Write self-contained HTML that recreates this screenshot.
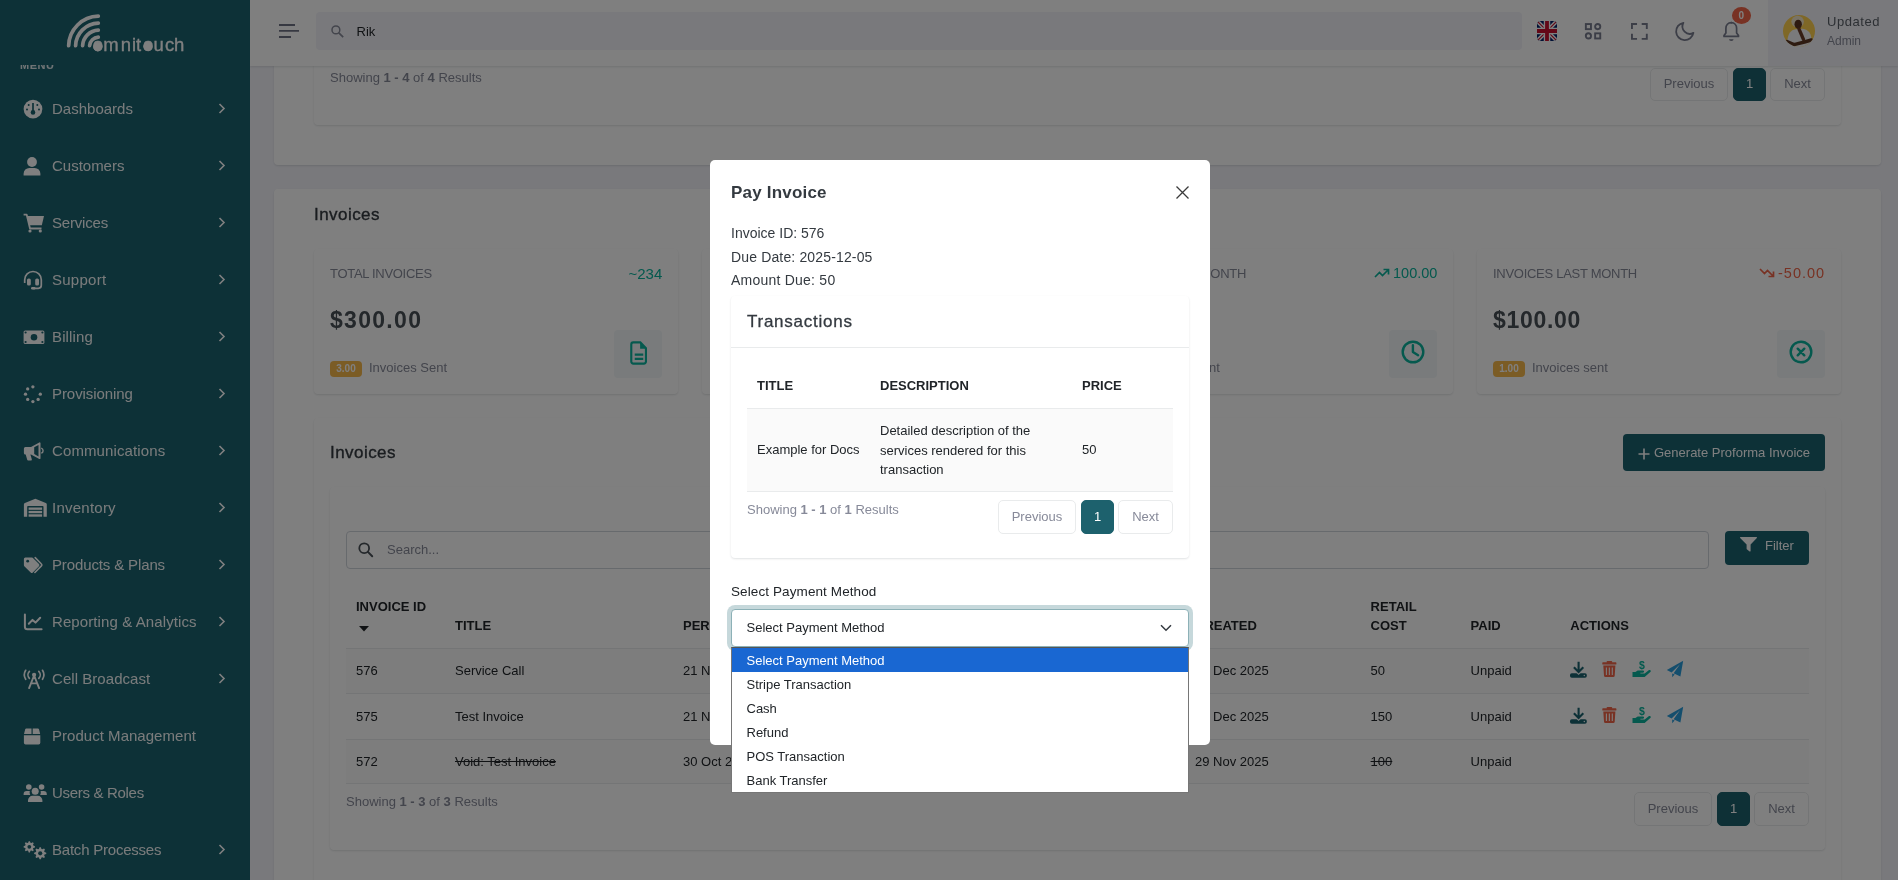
<!DOCTYPE html>
<html lang="en">
<head>
<meta charset="utf-8">
<title>Pay Invoice</title>
<style>
*{box-sizing:border-box;margin:0;padding:0}
html,body{width:1898px;height:880px;overflow:hidden}
body{background:#f3f3f9;font-family:"Liberation Sans",sans-serif;font-size:13px;line-height:19.5px;color:#212529;position:relative}
.a{position:absolute;white-space:nowrap}
svg{display:block;position:absolute;overflow:visible}
b{font-weight:700}
/* sidebar */
#sidebar{position:absolute;left:0;top:0;width:250px;height:880px;background:#1a626f;overflow:hidden}
#sidebar .tx{position:absolute;left:52px;font-size:15px;line-height:20px;color:#f4f7f7;white-space:nowrap}
/* header */
#header{position:absolute;left:250px;top:0;width:1648px;height:66px;background:#fff;box-shadow:0 1px 2px rgba(56,65,74,.15)}
/* cards */
.card{position:absolute;background:#fff;border-radius:4px;box-shadow:0 1px 2px rgba(56,65,74,.15)}
.muted{color:#878a99}
.pg{position:absolute;height:33.7px;border:1px solid #e9ebec;border-radius:5px;background:#fff;color:#878a99;font-size:13px;line-height:31.7px;text-align:center}
.pg.on{background:#1d616d;border-color:#1d616d;color:#fff}
.stat-t{position:absolute;font-size:13px;letter-spacing:-.3px;color:#878a99;text-transform:uppercase;white-space:nowrap}
.stat-v{position:absolute;font-size:23px;font-weight:700;letter-spacing:1px;color:#495057;white-space:nowrap}
.bdg{position:absolute;width:32px;height:16px;border-radius:4px;background:#f7b84b;color:#fff;font-size:10px;font-weight:700;line-height:16px;text-align:center}
.ibox{position:absolute;width:48px;height:48px;border-radius:4px;background:#f3f6f9}
.th{position:absolute;font-weight:700;font-size:13px;color:#212529;white-space:nowrap}
.td{position:absolute;font-size:13px;color:#212529;white-space:nowrap}
.hl{position:absolute;height:1px;background:#e9ebec}
#content,#header,#sidebar,#overlay{will-change:transform}
/* overlay */
#backdrop{position:absolute;left:0;top:0;width:1898px;height:880px;background:rgba(0,0,0,.5)}
#modal{position:absolute;left:710px;top:160px;width:500px;height:585px;background:#fff;border-radius:5px}
#modal .a{color:#212529}
</style>
</head>
<body>
<div id="content">
<!-- previous section (scrolled) -->
<div class="card" style="left:274px;top:-40px;width:1607px;height:205px"></div>
<div class="card" style="left:314px;top:-20px;width:1527px;height:145px"></div>
<div class="a muted" style="left:330px;top:68px">Showing <b>1 - 4</b> of <b>4</b> Results</div>
<div class="pg" style="left:1650px;top:68px;width:78px;height:32.700px;line-height:30.700px">Previous</div>
<div class="pg on" style="left:1733px;top:68px;width:33px;height:32.700px;line-height:30.700px">1</div>
<div class="pg" style="left:1770px;top:68px;width:55px;height:32.700px;line-height:30.700px">Next</div>

<!-- invoices section -->
<div class="card" style="left:274px;top:189px;width:1607px;height:760px"></div>
<div class="a" style="left:314px;top:204px;font-size:17px;letter-spacing:.45px;line-height:22px;color:#343a40;-webkit-text-stroke:.35px #343a40">Invoices</div>

<!-- stat cards -->
<div class="card" style="left:314px;top:249px;width:364px;height:145px"></div>
<div class="card" style="left:702px;top:249px;width:364px;height:145px"></div>
<div class="card" style="left:1089px;top:249px;width:364px;height:145px"></div>
<div class="card" style="left:1477px;top:249px;width:364px;height:145px"></div>

<div class="stat-t" style="left:330px;top:264px">Total Invoices</div>
<div class="a" style="left:628.500px;top:264px;font-size:15px;color:#0ab39c">~234</div>
<div class="stat-v" style="left:330px;top:306px;line-height:28px;letter-spacing:1.300px">$300.00</div>
<div class="bdg" style="left:330px;top:361px">3.00</div>
<div class="a muted" style="left:369px;top:358px">Invoices Sent</div>
<div class="ibox" style="left:614px;top:330px"></div>
<svg style="left:626.600px;top:341px" width="24" height="24" viewBox="0 0 24 24"><g transform="translate(12 12) scale(1.12 1.17) translate(-12 -12)"><path d="M6.200 3h7l5 5v11.200a1.800 1.800 0 0 1-1.800 1.800H6.900a1.800 1.800 0 0 1-1.800-1.800V4.800a1.800 1.800 0 0 1 1.800-1.800z" fill="none" stroke="#0ab39c" stroke-width="1.900"/><path d="M13 2.600l5.800 5.800H13z" fill="#0ab39c"/><path d="M8.200 13.300h7.600M8.200 17h7.600" stroke="#0ab39c" stroke-width="1.900"/></g></svg>


<div class="stat-t" style="left:1105px;top:264px;letter-spacing:-.28px">Invoices This Month</div>
<div class="a" style="left:1393px;top:264px;font-size:14.5px;color:#0ab39c">100.00</div>
<svg style="left:1374px;top:266px" width="16" height="14" viewBox="0 0 16 14"><path d="M1 11l4.5-4.5 3 3L14 4M9.5 3.5H14.5V8.5" fill="none" stroke="#0ab39c" stroke-width="1.7"/></svg>
<div class="a muted" style="left:1144px;top:358px">Invoices sent</div>
<div class="ibox" style="left:1389px;top:330px"></div>
<svg style="left:1401.400px;top:340.400px" width="24" height="24" viewBox="0 0 24 24"><circle cx="12" cy="12" r="10.300" fill="none" stroke="#0ab39c" stroke-width="2.400"/><path d="M11.900 5.200v6.800l5.200 3.200" fill="none" stroke="#0ab39c" stroke-width="2.400" stroke-linecap="round" stroke-linejoin="round"/></svg>

<div class="stat-t" style="left:1493px;top:264px;letter-spacing:-.28px">Invoices Last Month</div>
<div class="a" style="left:1778px;top:264px;font-size:14.5px;letter-spacing:1px;color:#f06548">-50.00</div>
<svg style="left:1759px;top:266px" width="16" height="14" viewBox="0 0 16 14"><path d="M1 3l4.5 4.5 3-3L14 10M9.5 10.5H14.5V5.5" fill="none" stroke="#f06548" stroke-width="1.7"/></svg>
<div class="stat-v" style="left:1493px;top:306px;line-height:28px;letter-spacing:.700px">$100.00</div>
<div class="bdg" style="left:1493px;top:361px">1.00</div>
<div class="a muted" style="left:1532px;top:358px">Invoices sent</div>
<div class="ibox" style="left:1777px;top:330px"></div>
<svg style="left:1789.400px;top:340.400px" width="24" height="24" viewBox="0 0 24 24"><circle cx="12" cy="12" r="10.300" fill="none" stroke="#0ab39c" stroke-width="2.400"/><path d="M8.700 8.700l6.600 6.600M15.300 8.700l-6.600 6.600" fill="none" stroke="#0ab39c" stroke-width="2.400" stroke-linecap="round"/></svg>

<!-- invoices table card -->
<div class="card" style="left:314px;top:418px;width:1527px;height:520px"></div>
<div class="a" style="left:330px;top:442px;font-size:17px;letter-spacing:.45px;line-height:22px;color:#343a40;-webkit-text-stroke:.35px #343a40">Invoices</div>
<div class="a" style="left:1623px;top:434px;width:202px;height:37px;border-radius:4px;background:#1a626f;color:#fff;font-size:13px;line-height:37px;padding-left:31px">Generate Proforma Invoice</div>
<svg style="left:1638px;top:448px" width="12" height="12" viewBox="0 0 12 12"><path d="M6 .5v11M.5 6h11" stroke="#fff" stroke-width="1.6"/></svg>

<div class="card" style="left:330px;top:486.500px;width:1495px;height:363.500px"></div>
<div class="a" style="left:346px;top:531px;width:1363px;height:38px;border:1px solid #ced4da;border-radius:4px;background:#fff"></div>
<svg style="left:358px;top:542px" width="16" height="16" viewBox="0 0 16 16"><circle cx="6.2" cy="6.2" r="4.9" fill="none" stroke="#495057" stroke-width="1.8"/><path d="M9.9 9.9l4.3 4.3" stroke="#495057" stroke-width="2" stroke-linecap="round"/></svg>
<div class="a muted" style="left:387px;top:540px">Search...</div>
<div class="a" style="left:1725px;top:531px;width:84px;height:34px;border-radius:4px;background:#1a626f;color:#fff;font-size:13px;line-height:30px;padding-left:40px">Filter</div>
<svg style="left:1740px;top:537px" width="17" height="15" viewBox="0 0 17 15"><path d="M.6 0h15.8a.6.6 0 0 1 .45 1L10.6 7.6V14a.6.6 0 0 1-1 .45l-2.8-2.3a.6.6 0 0 1-.2-.45V7.6L.15 1A.6.6 0 0 1 .6 0z" fill="#fff"/></svg>

<!-- table -->
<div class="a" style="left:346px;top:648px;width:1463px;height:46px;background:rgba(0,0,0,.014)"></div>
<div class="a" style="left:346px;top:739px;width:1463px;height:45px;background:rgba(0,0,0,.014)"></div>
<div class="hl" style="left:346px;top:648px;width:1463px"></div>
<div class="hl" style="left:346px;top:693px;width:1463px"></div>
<div class="hl" style="left:346px;top:739px;width:1463px"></div>
<div class="hl" style="left:346px;top:783px;width:1463px"></div>

<div class="th" style="left:356px;top:597px">INVOICE ID</div>
<svg style="left:359px;top:626px" width="10" height="6" viewBox="0 0 10 6"><path d="M0 0h10L5 5.5z" fill="#212529"/></svg>
<div class="th" style="left:455px;top:616px">TITLE</div>
<div class="th" style="left:683px;top:616px">PERIOD START</div>
<div class="th" style="left:1195px;top:616px">CREATED</div>
<div class="th" style="left:1370.600px;top:597px">RETAIL</div>
<div class="th" style="left:1370.600px;top:616px">COST</div>
<div class="th" style="left:1470.600px;top:616px">PAID</div>
<div class="th" style="left:1570.300px;top:616px">ACTIONS</div>

<div class="td" style="left:356px;top:661px">576</div>
<div class="td" style="left:455px;top:661px">Service Call</div>
<div class="td" style="left:683px;top:661px">21 Nov 2025</div>
<div class="td" style="left:1195px;top:661px">05 Dec 2025</div>
<div class="td" style="left:1370.600px;top:661px">50</div>
<div class="td" style="left:1470.600px;top:661px">Unpaid</div>

<div class="td" style="left:356px;top:707px">575</div>
<div class="td" style="left:455px;top:707px">Test Invoice</div>
<div class="td" style="left:683px;top:707px">21 Nov 2025</div>
<div class="td" style="left:1195px;top:707px">05 Dec 2025</div>
<div class="td" style="left:1370.600px;top:707px">150</div>
<div class="td" style="left:1470.600px;top:707px">Unpaid</div>

<div class="td" style="left:356px;top:752px">572</div>
<div class="td" style="left:455px;top:752px;text-decoration:line-through">Void: Test Invoice</div>
<div class="td" style="left:683px;top:752px">30 Oct 2025</div>
<div class="td" style="left:1195px;top:752px">29 Nov 2025</div>
<div class="td" style="left:1370.600px;top:752px;text-decoration:line-through">100</div>
<div class="td" style="left:1470.600px;top:752px">Unpaid</div>

<svg style="left:0;top:0" width="1898" height="880" viewBox="0 0 1898 880"><g transform="translate(0,0)"><rect x="1570" y="673.200" width="16.800" height="4.500" rx="1.800" fill="#1a626f"/><path d="M1574.500 667.900l4.100 4.100 4.100-4.100" fill="none" stroke="#f7f7f7" stroke-width="4.400"/><path d="M1578.600 661.800v9.700M1573.900 667.300l4.700 4.700 4.700-4.700" fill="none" stroke="#1a626f" stroke-width="2.100"/><circle cx="1584.300" cy="675.500" r=".700" fill="#f7f7f7"/><rect x="1602.300" y="662.300" width="14.100" height="2.300" rx=".600" fill="#f06548"/><rect x="1606.600" y="660.900" width="5.600" height="2.200" rx=".800" fill="#f06548"/><path d="M1603.300 665.600h12.100l-.700 10.200a1.400 1.400 0 0 1-1.400 1.300h-7.900a1.400 1.400 0 0 1-1.400-1.300z" fill="#f06548"/><path d="M1606.400 667.600v7.300M1609.350 667.600v7.300M1612.300 667.600v7.300" stroke="#f7f7f7" stroke-width="1.100" fill="none"/><path d="M1632.500 677v-4.900h2.900l2.300-1.600h5.300a1.100 1.100 0 0 1 0 2.200h-2.600v.700h4.300l4.300-3.300a1.200 1.200 0 0 1 1.600 1.700l-5.400 4.600a2 2 0 0 1-1.300.600z" fill="#0ab39c"/><text x="1641.800" y="669.300" text-anchor="middle" font-family="'Liberation Sans',sans-serif" font-weight="700" font-size="10.500" fill="#0ab39c">$</text><path d="M1683.200 660.700L1666.800 670l4.800 2.400 8.400-8.200-6.400 9.100 6.800 3.300z" fill="#299cdb"/><path d="M1672.200 673.500v3.700l2.500-2.600z" fill="#299cdb"/></g><g transform="translate(0,46)"><rect x="1570" y="673.200" width="16.800" height="4.500" rx="1.800" fill="#1a626f"/><path d="M1574.500 667.900l4.100 4.100 4.100-4.100" fill="none" stroke="#fff" stroke-width="4.400"/><path d="M1578.600 661.800v9.700M1573.900 667.300l4.700 4.700 4.700-4.700" fill="none" stroke="#1a626f" stroke-width="2.100"/><circle cx="1584.300" cy="675.500" r=".700" fill="#fff"/><rect x="1602.300" y="662.300" width="14.100" height="2.300" rx=".600" fill="#f06548"/><rect x="1606.600" y="660.900" width="5.600" height="2.200" rx=".800" fill="#f06548"/><path d="M1603.300 665.600h12.100l-.700 10.200a1.400 1.400 0 0 1-1.400 1.300h-7.900a1.400 1.400 0 0 1-1.400-1.300z" fill="#f06548"/><path d="M1606.400 667.600v7.300M1609.350 667.600v7.300M1612.300 667.600v7.300" stroke="#fff" stroke-width="1.100" fill="none"/><path d="M1632.500 677v-4.900h2.900l2.300-1.600h5.300a1.100 1.100 0 0 1 0 2.200h-2.600v.700h4.300l4.300-3.300a1.200 1.200 0 0 1 1.600 1.700l-5.400 4.600a2 2 0 0 1-1.300.600z" fill="#0ab39c"/><text x="1641.800" y="669.300" text-anchor="middle" font-family="'Liberation Sans',sans-serif" font-weight="700" font-size="10.500" fill="#0ab39c">$</text><path d="M1683.200 660.700L1666.800 670l4.800 2.400 8.400-8.200-6.400 9.100 6.800 3.300z" fill="#299cdb"/><path d="M1672.200 673.500v3.700l2.500-2.600z" fill="#299cdb"/></g></svg>

<div class="a muted" style="left:346px;top:792px">Showing <b>1 - 3</b> of <b>3</b> Results</div>
<div class="pg" style="left:1634px;top:792px;width:78px">Previous</div>
<div class="pg on" style="left:1717px;top:792px;width:33px">1</div>
<div class="pg" style="left:1754px;top:792px;width:55px">Next</div>
</div>
<div id="header">
<svg style="left:29px;top:24px" width="20" height="14" viewBox="0 0 20 14"><path d="M0 1h16M0 6.900h20M0 13h12" stroke="#6f7385" stroke-width="1.900"/></svg>
<div class="a" style="left:66px;top:12px;width:1206px;height:38px;border-radius:4px;background:#f3f3f9"></div>
<svg style="left:81px;top:25px" width="13" height="13" viewBox="0 0 13 13"><circle cx="4.900" cy="4.900" r="3.900" fill="none" stroke="#878a99" stroke-width="1.500"/><path d="M7.800 7.800l4.400 4.400" stroke="#878a99" stroke-width="1.700"/></svg>
<div class="a" style="left:106.500px;top:22px;color:#212529">Rik</div>
<!-- flag -->
<svg style="left:1287px;top:21px" width="20" height="20" viewBox="0 0 20 20">
<defs><clipPath id="fc"><rect width="20" height="20" rx="4"/></clipPath></defs>
<g clip-path="url(#fc)"><rect width="20" height="20" fill="#012169"/><path d="M0 0l20 20M20 0L0 20" stroke="#fff" stroke-width="4"/><path d="M0 0l20 20M20 0L0 20" stroke="#c8102e" stroke-width="1.200"/><path d="M10 0v20M0 10h20" stroke="#fff" stroke-width="6.500"/><path d="M10 0v20M0 10h20" stroke="#c8102e" stroke-width="3.800"/></g></svg>
<!-- grid -->
<svg style="left:1334px;top:23px" width="18" height="17" viewBox="0 0 18 17"><g fill="none" stroke="#787c8e" stroke-width="1.900"><rect x="1.850" y="1.050" width="5.100" height="5.100"/><circle cx="13.700" cy="3.600" r="2.600"/><circle cx="4.400" cy="12.900" r="2.600"/><rect x="11.150" y="10.350" width="5.100" height="5.100"/></g></svg>
<!-- fullscreen -->
<svg style="left:1380px;top:23px" width="18" height="17" viewBox="0 0 18 17"><path d="M1.950 6.100V1.050h5.100M11.700 1.050h5.100v5.050M16.800 10.800v5.050h-5.100M7.050 15.850H1.950V10.800" fill="none" stroke="#787c8e" stroke-width="1.900"/></svg>
<!-- moon -->
<svg style="left:1425px;top:21px" width="20" height="20" viewBox="0 0 20 20"><path d="M8.400 1.800A8.700 8.700 0 1 0 18.400 11.900A7.400 7.400 0 0 1 8.400 1.800z" fill="none" stroke="#787c8e" stroke-width="1.800" stroke-linejoin="round"/></svg>
<!-- bell -->
<svg style="left:1472px;top:21px" width="19" height="20" viewBox="0 0 19 20"><path d="M9.300 1.600c3.200 0 5.300 2.500 5.300 5.600v4.800l1.900 2.600v.800H2v-.800l1.900-2.600V7.200c0-3.100 2.100-5.600 5.400-5.600z" fill="none" stroke="#787c8e" stroke-width="1.700" stroke-linejoin="round"/><path d="M7 18.200h4.600a2.300 1.700 0 0 1-4.600 0z" fill="#787c8e"/><circle cx="9.300" cy="1.700" r="1" fill="#787c8e"/></svg>
<div class="a" style="left:1481.500px;top:6.500px;width:19.500px;height:17px;border-radius:50%;background:#f06548;color:#fff;font-size:10px;font-weight:700;line-height:17px;text-align:center">0</div>
<!-- user -->
<div class="a" style="left:1518px;top:0;width:130px;height:66px;background:#f3f3f9"></div>
<div class="a" style="left:1533px;top:14.500px;width:32px;height:32px;border-radius:50%;background:#ffd04e;overflow:hidden"><svg style="left:0;top:0" width="32" height="32" viewBox="0 0 32 32"><ellipse cx="14.600" cy="6.600" rx="6.300" ry="5.800" fill="#f3e6cb"/><ellipse cx="15.200" cy="9.300" rx="3.700" ry="4.600" fill="#5d3622"/><path d="M4.300 28C4.300 18.500 8 15 12.500 14.300L19.500 13.800C26 14.800 28.500 19 28.500 26V32H4.300z" fill="#f4f4f6"/><path d="M16 14L20.500 24.500" stroke="#6a3d28" stroke-width="3.300" stroke-linecap="round" fill="none"/><path d="M4 26.500L11 29.600 21.500 27 28.300 25" stroke="#5d3622" stroke-width="3.400" stroke-linecap="round" stroke-linejoin="round" fill="none"/></svg></div>
<div class="a" style="left:1577px;top:12px;font-size:13px;letter-spacing:.55px;color:#5a6068">Updated</div>
<div class="a muted" style="left:1577px;top:31.700px;font-size:12px">Admin</div>
</div>
<div id="sidebar">
<div class="a" style="left:20px;top:57.500px;font-size:11px;font-weight:700;letter-spacing:.5px;line-height:14px;color:#dfe9ea">MENU</div>
<div class="tx" style="top:99px;letter-spacing:0.01px">Dashboards</div>
<div class="tx" style="top:156px;letter-spacing:-0.01px">Customers</div>
<div class="tx" style="top:213px;letter-spacing:-0.19px">Services</div>
<div class="tx" style="top:270px;letter-spacing:0.26px">Support</div>
<div class="tx" style="top:327px;letter-spacing:0.14px">Billing</div>
<div class="tx" style="top:384px;letter-spacing:-0.07px">Provisioning</div>
<div class="tx" style="top:441px;letter-spacing:0.11px">Communications</div>
<div class="tx" style="top:498px;letter-spacing:0.24px">Inventory</div>
<div class="tx" style="top:555px;letter-spacing:-0.13px">Products &amp; Plans</div>
<div class="tx" style="top:612px;letter-spacing:0.10px">Reporting &amp; Analytics</div>
<div class="tx" style="top:669px;letter-spacing:0.05px">Cell Broadcast</div>
<div class="tx" style="top:726px;letter-spacing:0.03px">Product Management</div>
<div class="tx" style="top:783px;letter-spacing:-0.31px">Users &amp; Roles</div>
<div class="tx" style="top:840px;letter-spacing:-0.22px">Batch Processes</div>
<svg style="left:0;top:0" width="250" height="880" viewBox="0 0 250 880" fill="#fff">
<path d="M219.500 104.0l4.500 4.500-4.500 4.500" fill="none" stroke="#fff" stroke-width="1.600"/>
<path d="M219.500 161.0l4.500 4.500-4.500 4.500" fill="none" stroke="#fff" stroke-width="1.600"/>
<path d="M219.500 218.0l4.500 4.500-4.500 4.500" fill="none" stroke="#fff" stroke-width="1.600"/>
<path d="M219.500 275.0l4.500 4.500-4.500 4.500" fill="none" stroke="#fff" stroke-width="1.600"/>
<path d="M219.500 332.0l4.500 4.500-4.500 4.500" fill="none" stroke="#fff" stroke-width="1.600"/>
<path d="M219.500 389.0l4.500 4.500-4.500 4.500" fill="none" stroke="#fff" stroke-width="1.600"/>
<path d="M219.500 446.0l4.500 4.500-4.500 4.500" fill="none" stroke="#fff" stroke-width="1.600"/>
<path d="M219.500 503.0l4.500 4.500-4.500 4.500" fill="none" stroke="#fff" stroke-width="1.600"/>
<path d="M219.500 560.0l4.500 4.500-4.500 4.500" fill="none" stroke="#fff" stroke-width="1.600"/>
<path d="M219.500 617.0l4.500 4.500-4.500 4.500" fill="none" stroke="#fff" stroke-width="1.600"/>
<path d="M219.500 674.0l4.500 4.500-4.500 4.500" fill="none" stroke="#fff" stroke-width="1.600"/>
<path d="M219.500 845.0l4.500 4.500-4.500 4.500" fill="none" stroke="#fff" stroke-width="1.600"/>
<circle cx="33" cy="109.1" r="9.350"/><path d="M33 103.1v8" stroke="#1a626f" stroke-width="1.700" fill="none"/><circle cx="33" cy="112.39999999999999" r="2.300" fill="#1a626f"/><circle cx="27" cy="109.39999999999999" r="1" fill="#1a626f"/><circle cx="39" cy="109.39999999999999" r="1" fill="#1a626f"/><circle cx="28.7" cy="104.89999999999999" r="1" fill="#1a626f"/><circle cx="37.3" cy="104.89999999999999" r="1" fill="#1a626f"/>
<circle cx="32" cy="162" r="4.900"/><path d="M23.600 175.500v-1.800a5.800 5.800 0 0 1 5.800-5.800h5.200a5.800 5.800 0 0 1 5.800 5.800v1.800z"/>
<path d="M27.200 216h16.800l-2.200 9.300H29.300z"/><path d="M23.600 214.700h3.100l3.300 13.800h11.500" fill="none" stroke="#fff" stroke-width="1.800" stroke-linejoin="round"/><circle cx="30" cy="231" r="1.600"/><circle cx="40.300" cy="231" r="1.600"/>
<path d="M24.700 283v-3.200a8.300 8.300 0 0 1 16.600 0v5.500a3 3 0 0 1-3 3h-5.500" fill="none" stroke="#fff" stroke-width="1.700"/><rect x="27" y="278.500" width="3.800" height="7" rx="1.600"/><rect x="35.200" y="278.500" width="3.800" height="7" rx="1.600"/><rect x="31" y="287" width="4.500" height="2.400" rx="1.200"/>
<rect x="23.600" y="330.500" width="20.800" height="13.500" rx="1.600"/><circle cx="34" cy="337.250" r="3.300" fill="#1a626f"/><circle cx="25.6" cy="332.5" r="1.100" fill="#1a626f"/><circle cx="42.4" cy="332.5" r="1.100" fill="#1a626f"/><circle cx="25.6" cy="342" r="1.100" fill="#1a626f"/><circle cx="42.4" cy="342" r="1.100" fill="#1a626f"/>
<circle cx="32.90" cy="386.80" r="1.650"/><circle cx="27.67" cy="388.97" r="1.650"/><circle cx="25.50" cy="394.20" r="1.650"/><circle cx="27.67" cy="399.43" r="1.650"/><circle cx="32.90" cy="401.60" r="1.650"/><circle cx="38.13" cy="399.43" r="1.650"/><circle cx="40.30" cy="394.20" r="1.650"/>
<path d="M23.900 448.500a1.500 1.500 0 0 1 1.500-1.500h5.600l8.300-4.600a.8.800 0 0 1 1.200.700v15.200a.8.800 0 0 1-1.200.700l-8.300-4.600h-.600l1.400 4.800a1 1 0 0 1-1 1.300h-2.600a1 1 0 0 1-1-.700l-1.500-5.400h-.3a1.500 1.500 0 0 1-1.500-1.500z"/><path d="M34.200 447.300l4.300-2.400v11.600l-4.300-2.400z" fill="#1a626f"/><path d="M41.200 448.200a2.600 2.600 0 0 1 0 5" fill="none" stroke="#fff" stroke-width="1.400"/>
<path d="M23.900 516.700v-12.300a1.600 1.600 0 0 1 1-1.500l9.800-4a1.700 1.700 0 0 1 1.300 0l9.800 4a1.600 1.600 0 0 1 1 1.500v12.300h-3.300v-9.900a.8.800 0 0 0-.8-.8H28a.8.800 0 0 0-.8.800v9.900z"/><rect x="28.600" y="507.500" width="13.500" height="2.300"/><rect x="28.600" y="510.900" width="13.500" height="2.300"/><rect x="28.600" y="514.300" width="13.500" height="2.400"/>
<path d="M23.900 558.900a1.500 1.500 0 0 1 1.500-1.500h6.200a1.500 1.500 0 0 1 1.100.400l6.300 6.300a1.500 1.500 0 0 1 0 2.100l-6.200 6.300a1.500 1.500 0 0 1-2.100 0l-6.400-6.300a1.500 1.500 0 0 1-.400-1.100z"/><circle cx="27.700" cy="561.200" r="1.400" fill="#1a626f"/><path d="M35.200 557.600l6.200 6.400a1.300 1.300 0 0 1 0 1.900l-6.500 6.600" fill="none" stroke="#fff" stroke-width="1.600" stroke-linecap="round"/>
<path d="M24.900 614.500v12.300a2.500 2.500 0 0 0 2.500 2.500h14.200" fill="none" stroke="#fff" stroke-width="2" stroke-linecap="round"/><path d="M28.800 623.800l3.700-3.900 3 2.700 4.700-4.900" fill="none" stroke="#fff" stroke-width="2" stroke-linecap="round" stroke-linejoin="round"/>
<circle cx="34.100" cy="674.800" r="2.100"/><path d="M34.100 675.500l-5 12.600M34.100 675.500l5 12.600M31 683.400h6.200" fill="none" stroke="#fff" stroke-width="1.900" stroke-linecap="round"/><path d="M29.400 671.300a5 5 0 0 0 0 7M38.800 671.300a5 5 0 0 1 0 7M25.700 670.300a8.500 8.500 0 0 0 0 9M42.500 670.300a8.500 8.500 0 0 1 0 9" fill="none" stroke="#fff" stroke-width="1.700" stroke-linecap="round"/>
<path d="M23.900 735.300h16.400v7.400a1.700 1.700 0 0 1-1.700 1.700H25.600a1.700 1.700 0 0 1-1.700-1.700z"/><path d="M26.300 728.400h5.200v5.700h-7.500l1.200-4.800a1.200 1.200 0 0 1 1.100-.9zM32.700 728.400h5.200a1.200 1.200 0 0 1 1.100.900l1.200 4.800h-7.500z"/>
<circle cx="28.800" cy="787" r="2.800"/><circle cx="41.600" cy="787" r="2.800"/><circle cx="35.200" cy="791.300" r="3.500"/><path d="M23.600 795v-.8a3.200 3.200 0 0 1 3.200-3.200h3a5.500 5.500 0 0 0 .4 4zM46.800 795v-.8a3.200 3.200 0 0 0-3.200-3.200h-3a5.500 5.500 0 0 1-.4 4zM28 802v-1.600a4.600 4.600 0 0 1 4.600-4.600h5.200a4.600 4.600 0 0 1 4.600 4.600v1.600z"/>
<path d="M34.97 846.19L34.97 847.41L33.33 847.98L32.98 848.82L33.74 850.37L32.87 851.24L31.32 850.48L30.48 850.83L29.91 852.47L28.69 852.47L28.12 850.83L27.28 850.48L25.73 851.24L24.86 850.37L25.62 848.82L25.27 847.98L23.63 847.41L23.63 846.19L25.27 845.62L25.62 844.78L24.86 843.23L25.73 842.36L27.28 843.12L28.12 842.77L28.69 841.13L29.91 841.13L30.48 842.77L31.32 843.12L32.87 842.36L33.74 843.23L32.98 844.78L33.33 845.62z"/><circle cx="29.3" cy="846.8" r="1.9" fill="#1a626f"/><path d="M46.26 852.64L46.26 853.96L44.52 854.56L44.15 855.46L44.95 857.12L44.02 858.05L42.36 857.25L41.46 857.62L40.86 859.36L39.54 859.36L38.94 857.62L38.04 857.25L36.38 858.05L35.45 857.12L36.25 855.46L35.88 854.56L34.14 853.96L34.14 852.64L35.88 852.04L36.25 851.14L35.45 849.48L36.38 848.55L38.04 849.35L38.94 848.98L39.54 847.24L40.86 847.24L41.46 848.98L42.36 849.35L44.02 848.55L44.95 849.48L44.15 851.14L44.52 852.04z"/><circle cx="40.2" cy="853.3" r="2.1" fill="#1a626f"/>
</svg>
<div class="a" style="left:0;top:0;width:250px;height:64.500px;background:#1a626f"></div>
<svg style="left:0;top:0" width="250" height="64" viewBox="0 0 250 64"><path d="M68.65 45.700A30.35 30.35 0 0 1 98.30 16.16" fill="none" stroke="#fff" stroke-width="3.700" stroke-linecap="round"/><path d="M75.60 45.700A23.4 23.4 0 0 1 98.30 23.11" fill="none" stroke="#fff" stroke-width="3.700" stroke-linecap="round"/><path d="M82.60 45.700A16.4 16.4 0 0 1 98.30 30.11" fill="none" stroke="#fff" stroke-width="3.700" stroke-linecap="round"/><path d="M89.60 45.700A9.4 9.4 0 0 1 98.30 37.11" fill="none" stroke="#fff" stroke-width="3.700" stroke-linecap="round"/><text y="51.300" x="92.700 103.200 120.800 131.900 136 142.900 153.600 164.900 174" font-family="'Liberation Sans',sans-serif" font-size="18.500" fill="#fff" stroke="#fff" stroke-width=".300">omnitouch</text><circle cx="97.800" cy="46.700" r="4.700" fill="#fff"/><circle cx="147.900" cy="46.400" r="4.600" fill="#fff"/></svg>
</div>
<div id="backdrop"></div>
<div id="modal"></div>
<div id="overlay">
<div class="a" style="left:731px;top:181.200px;font-size:17px;font-weight:700;letter-spacing:.2px;line-height:24px;color:#343a40">Pay Invoice</div>
<svg style="left:1176px;top:186px" width="13" height="13" viewBox="0 0 13 13"><path d="M.5.5l12 12M12.500 .5l-12 12" stroke="#3a3a3a" stroke-width="1.3"/></svg>
<div class="a" style="left:731px;top:222.800px;font-size:14px;letter-spacing:0;line-height:20px;color:#343a40">Invoice ID: 576</div>
<div class="a" style="left:731px;top:246.600px;font-size:14px;letter-spacing:.15px;line-height:20px;color:#343a40">Due Date: 2025-12-05</div>
<div class="a" style="left:731px;top:269.600px;font-size:14px;letter-spacing:.23px;line-height:20px;color:#343a40">Amount Due: 50</div>

<div class="card" style="left:731px;top:296px;width:458px;height:262px"></div>
<div class="a" style="left:747px;top:311.400px;font-size:17px;letter-spacing:.75px;line-height:22px;color:#343a40;-webkit-text-stroke:.3px #343a40">Transactions</div>
<div class="hl" style="left:731px;top:347px;width:458px"></div>
<div class="th" style="left:757px;top:376px">TITLE</div>
<div class="th" style="left:880px;top:376px">DESCRIPTION</div>
<div class="th" style="left:1082px;top:376px">PRICE</div>
<div class="a" style="left:747px;top:409px;width:426px;height:82px;background:rgba(0,0,0,.02)"></div>
<div class="hl" style="left:747px;top:408px;width:426px"></div>
<div class="hl" style="left:747px;top:491px;width:426px"></div>
<div class="td" style="left:757px;top:440px">Example for Docs</div>
<div class="td" style="left:880px;top:421px;line-height:19.5px">Detailed description of the<br>services rendered for this<br>transaction</div>
<div class="td" style="left:1082px;top:440px">50</div>
<div class="a muted" style="left:747px;top:500px;color:#878a99">Showing <b>1 - 1</b> of <b>1</b> Results</div>
<div class="pg" style="left:998px;top:500px;width:78px">Previous</div>
<div class="pg on" style="left:1081px;top:500px;width:33px">1</div>
<div class="pg" style="left:1118px;top:500px;width:55px">Next</div>

<div class="a" style="left:731px;top:582px;font-size:13.5px;letter-spacing:.1px;line-height:20px">Select Payment Method</div>
<div class="a" style="left:731px;top:609px;width:458px;height:38px;border:1px solid #8db1b7;border-radius:4px;background:#fff;box-shadow:0 0 0 4px rgba(26,98,111,.25);padding-left:14.500px;line-height:36px;font-size:13px">Select Payment Method</div>
<svg style="left:1160px;top:624px" width="12" height="8" viewBox="0 0 12 8"><path d="M1 1.2l5 5 5-5" fill="none" stroke="#343a40" stroke-width="1.5"/></svg>
<div class="a" style="left:731px;top:647px;width:458px;height:146px;background:#fff;border:1px solid #767676;border-top-color:#555"></div>
<div class="a" style="left:732px;top:648px;width:456px;height:24px;background:#1967d2"></div>
<div class="a" style="left:746.500px;top:651px;line-height:19px;color:#fff!important"><span style="color:#fff">Select Payment Method</span></div>
<div class="a" style="left:746.500px;top:675px;line-height:19px">Stripe Transaction</div>
<div class="a" style="left:746.500px;top:699px;line-height:19px">Cash</div>
<div class="a" style="left:746.500px;top:723px;line-height:19px">Refund</div>
<div class="a" style="left:746.500px;top:747px;line-height:19px">POS Transaction</div>
<div class="a" style="left:746.500px;top:771px;line-height:19px">Bank Transfer</div>
</div>

</body>
</html>
